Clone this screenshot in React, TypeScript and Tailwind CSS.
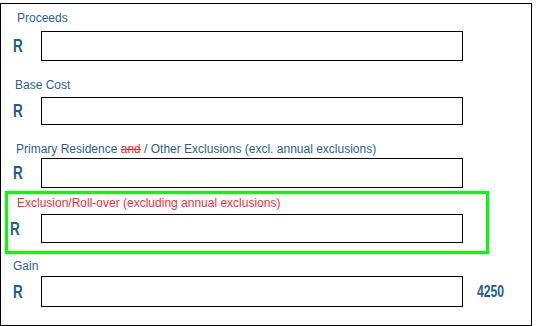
import React from 'react';

const labelCls = "block text-[12px] leading-[14px] text-[#2b5f9e] whitespace-nowrap";
const font = { fontFamily: '"Liberation Sans", Arial, sans-serif' };

type RowProps = { h: string; mt: string; rLeft?: string; extra?: React.ReactNode };

const InputRow: React.FC<RowProps> = ({ h, mt, rLeft = 'ml-[12px]', extra }) => (
  <div className={`flex items-center ${mt}`}>
    <span className={`${rLeft} w-[10px] text-[18px] leading-none font-bold text-[#1f5c99] scale-x-[0.75] origin-left`}>R</span>
    <div className={`ml-[18px] w-[422px] ${h} border border-black bg-white`} />
    {extra}
  </div>
);

export default function App() {
  return (
    <div className="w-[538px] h-[326px] bg-white" style={font}>
      <div className="mt-[3px] w-[532px] h-[323px] border border-black">
        <span className={`${labelCls} mt-[7px] ml-[16px]`}>Proceeds</span>
        <InputRow mt="mt-[6px]" h="h-[30px]" />

        <span className={`${labelCls} mt-[17px] ml-[14px]`}>Base Cost</span>
        <InputRow mt="mt-[5px]" h="h-[28px]" />

        <span className={`${labelCls} mt-[17px] ml-[15px]`}>
          Primary Residence <span className="text-[#ff2a2a] line-through">and</span> / Other Exclusions (excl. annual exclusions)
        </span>
        <InputRow mt="mt-[2px]" h="h-[30px]" />

        <div className="mt-[3px] ml-[4px] w-[484px] h-[63px] border-[3px] border-[#00ff00]">
          <span className={`${labelCls} mt-[2px] ml-[9px] !text-[#ff2a3a]`}>Exclusion/Roll-over (excluding annual exclusions)</span>
          <div className="flex items-center mt-[4px]">
            <span className="ml-[2px] w-[10px] text-[18px] leading-none font-bold text-[#1f5c99] scale-x-[0.75] origin-left">R</span>
            <div className="ml-[21px] w-[422px] h-[29px] border border-black bg-white" />
          </div>
        </div>

        <span className={`${labelCls} mt-[5px] ml-[12px]`}>Gain</span>
        <InputRow
          mt="mt-[3px]"
          h="h-[31px]"
          extra={
            <span className="ml-[14px] text-[16px] leading-none font-bold text-[#1f5c99] scale-x-[0.76] origin-left">4250</span>
          }
        />
      </div>
    </div>
  );
}
